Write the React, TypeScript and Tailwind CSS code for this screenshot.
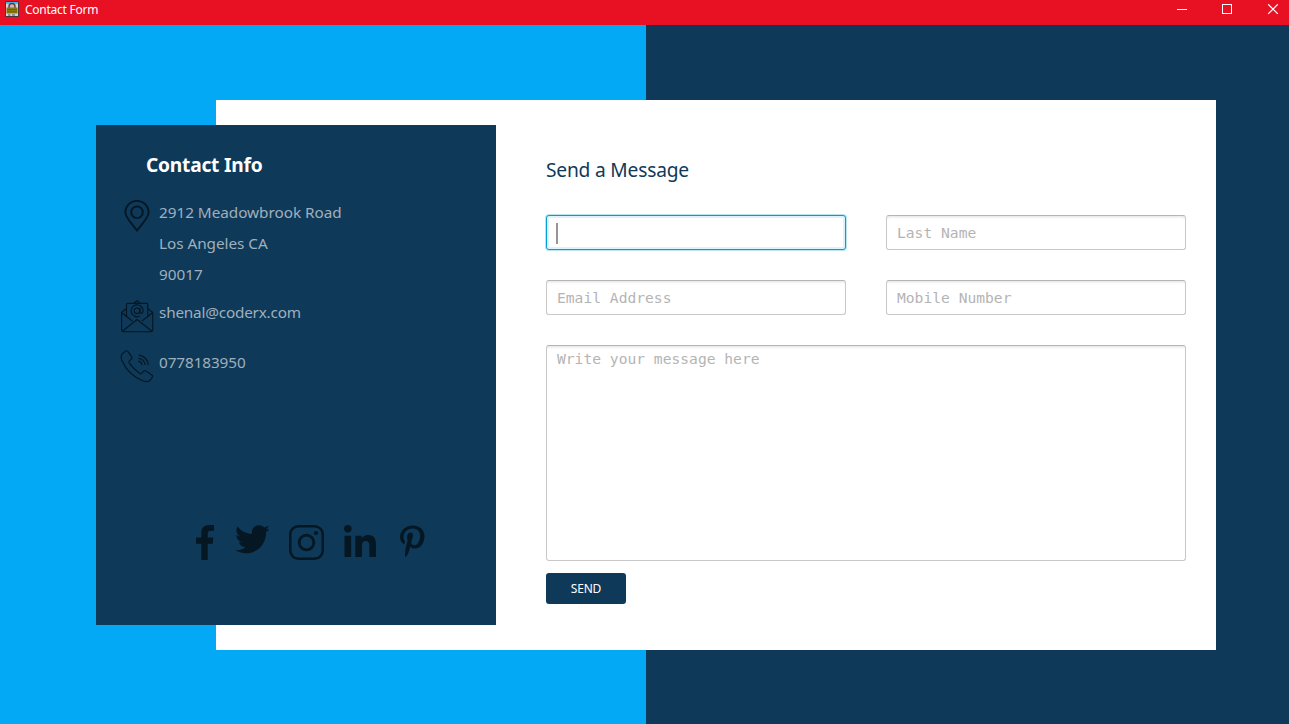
import React from 'react';
import { FaTwitter, FaLinkedinIn, FaPinterestP } from 'react-icons/fa';

const sans = "font-['Noto_Sans','Open_Sans',sans-serif]";
const mono = "font-['DejaVu_Sans_Mono','Liberation_Mono',monospace]";
const field =
  'block w-full resize-none rounded-[3px] border border-[#c8c8c8] border-t-[#b5b5b5] bg-white px-[10px] text-[14.64px] placeholder-[#b4b4b4] outline-none shadow-[inset_0_3px_3px_-2px_rgba(0,0,0,0.12)]';

function AppIcon() {
  return (
    <svg className="ml-[5px] mt-px h-4 w-[14px]" viewBox="0 0 14 16">
      <rect width="14" height="16" rx="1" fill="#4a3440" />
      <rect x="1" y="1" width="12" height="1.5" fill="#45b5e8" />
      <rect x="1" y="2.5" width="12" height="12.5" fill="#d9d4cf" />
      <path d="M4 7V5.500a3 3 0 0 1 6 0V7" fill="#c9b8bb" stroke="#6b3440" strokeWidth="1.400" />
      <rect x="1.500" y="6.500" width="11" height="6" fill="#8a7a14" />
      <path d="M2 8.500h10M2 10.700h10" stroke="#5d520c" strokeWidth=".6" />
      <path d="M3 14h2.500M7 14h3" stroke="#3f4c5f" strokeWidth="1" />
    </svg>
  );
}

function PinIcon() {
  return (
    <svg className="ml-[28px] h-8 w-[26px]" viewBox="0 0 26 32" fill="none" stroke="#051723" strokeWidth="1.9">
      <path d="M13 30.400C10.800 27 1.400 18 1.400 12.400a11.600 11.600 0 0 1 23.200 0C24.600 18 15.200 27 13 30.400Z" />
      <circle cx="13" cy="12.300" r="5.800" />
    </svg>
  );
}

function MailIcon() {
  return (
    <svg className="ml-[24px] mt-px h-[33px] w-[34px]" viewBox="0 0 34 33" fill="none" stroke="#051723" strokeWidth="1.150" strokeLinejoin="round">
      <path d="M6.500 8.500 1.600 12.500V30a1.700 1.700 0 0 0 1.700 1.700H31a1.700 1.700 0 0 0 1.700-1.700V12.500L27.800 8.500" />
      <path d="M6.500 16.500V4.300a1 1 0 0 1 1-1H26.800a1 1 0 0 1 1 1V16.500M14.200 3 17.100.8 20 3" />
      <path d="M1.800 12.800 12.300 21M32.500 12.800 22 21M2.300 31.200 17.100 19.500 32 31.200" />
      <circle cx="17" cy="10.800" r="2.800" />
      <path d="M20 7.700V12c0 2.300 3.100 1.700 3.100-1.200a6 6 0 1 0-3.200 5.300" />
    </svg>
  );
}

function PhoneIcon() {
  return (
    <svg className="ml-[24px] mt-px h-[33px] w-[34px]" viewBox="0 0 34 33" fill="none" stroke="#051723" strokeWidth="1.200" strokeLinejoin="round">
      <path d="M2.300 3.700 5.400 1.100a1.700 1.700 0 0 1 2.400.3l3.700 5.200a2 2 0 0 1-.3 2.600L9.400 11a1.500 1.500 0 0 0-.2 1.800c2.900 4.300 6.400 7.900 10.700 10.700a1.500 1.500 0 0 0 1.900-.2l1.600-1.900a2 2 0 0 1 2.600-.3l5.800 3.800a1.700 1.700 0 0 1 .4 2.400l-1.700 2.500c-1.300 1.900-4.200 2.300-7.600 1C13.300 27.100 5.900 19.700 1.800 10.200 1 7.900.9 5.300 2.300 3.700Z" />
      <path d="M18.700 5.100a10.500 10.500 0 0 1 9.600 9.900M18.500 8.300a7.200 7.200 0 0 1 6.600 6.700M18.200 11.300a4 4 0 0 1 3.800 3.800" />
    </svg>
  );
}

function FacebookIcon() {
  return (
    <svg className="ml-[100px] mt-px h-[35px] w-[18px]" viewBox="0 0 18 35" fill="currentColor">
      <path d="M18 .1h-4.500C8 .1 5.300 3 5.300 8v4.500H0v6.200h5.300V35h6.400V18.700h5l.7-6.200h-5.700V8.800c0-2.200.8-3.100 3-3.100H18z" />
    </svg>
  );
}

function InstagramIcon() {
  return (
    <svg className="ml-[20px] mt-px h-[35px] w-[35px]" viewBox="0 0 35 35" fill="none" stroke="currentColor">
      <rect x="1.250" y="1.250" width="32.500" height="32.500" rx="8.200" strokeWidth="2.500" />
      <circle cx="17.500" cy="17.500" r="7.300" strokeWidth="2.800" />
      <circle cx="27" cy="8" r="2.100" fill="currentColor" stroke="none" />
    </svg>
  );
}

function ContactPanel() {
  return (
    <aside className={`-ml-[120px] flex h-[500px] w-[400px] shrink-0 flex-col bg-[#0f3959] text-[15.300px] leading-[31px] text-[#9fb0bd] ${sans}`}>
      <h2 className="ml-[50px] mt-[26px] h-[28px] whitespace-nowrap text-[19.200px] font-bold leading-[28px] tracking-[-0.230px] text-white">Contact Info</h2>
      <div className="mt-[21px] flex h-[93px]">
        <PinIcon />
        <address className="-mt-[3px] ml-[9px] whitespace-nowrap not-italic tracking-[-0.030px]">
          <div>2912 Meadowbrook Road</div>
          <div>Los Angeles CA</div>
          <div>90017</div>
        </address>
      </div>
      <div className="mt-[6px] flex h-[50px]">
        <MailIcon />
        <span className="-mt-[2px] ml-[5px] tracking-[-0.200px]">shenal@coderx.com</span>
      </div>
      <div className="flex h-[50px]">
        <PhoneIcon />
        <span className="-mt-[2px] ml-[5px] tracking-[-0.090px]">0778183950</span>
      </div>
      <div className="mt-[125px] flex items-start text-[#051723]">
        <FacebookIcon />
        <FaTwitter className="-mt-[2px] ml-[20.500px] h-[34.500px] w-[34.500px]" />
        <InstagramIcon />
        <FaLinkedinIn className="ml-[20px] mt-px h-[36.600px] w-[32px]" />
        <FaPinterestP className="ml-[24px] mt-[0.600px] h-[32.700px] w-[24.500px]" />
      </div>
    </aside>
  );
}

function MessageForm() {
  return (
    <form className={`ml-[50px] w-[640px] ${mono}`} onSubmit={(e) => e.preventDefault()}>
      <h1 className={`mt-[31px] h-[28px] whitespace-nowrap text-[19.200px] leading-[28px] tracking-[-0.200px] text-[#0f3959] ${sans}`}>Send a Message</h1>
      <div className="mt-[31px] grid grid-cols-2 gap-x-10 gap-y-[30px]">
        <div className="flex h-[35px] items-center rounded-[3px] border border-[#039ed3] bg-white pl-[9px] shadow-[0_0_0_1px_#b9e5f3,inset_0_0_0_2px_#e0f2f9]">
          <span className="mt-px h-[21px] w-[2px] bg-[#969696]" />
        </div>
        <input className={`${field} h-[35px]`} placeholder="Last Name" />
        <input className={`${field} h-[35px]`} placeholder="Email Address" />
        <input className={`${field} h-[35px]`} placeholder="Mobile Number" />
      </div>
      <textarea className={`${field} mt-[30px] h-[216px] pt-[3px] leading-[19px]`} placeholder="Write your message here" />
      <button className={`mt-[12px] block h-[31px] w-[80px] rounded-[3px] bg-[#0f3959] text-[12px] tracking-[-0.200px] text-white ${sans}`}>SEND</button>
    </form>
  );
}

export default function App() {
  return (
    <div className="flex h-[724px] w-[1289px] flex-col overflow-hidden">
      <header className={`flex h-[25px] shrink-0 bg-[#e81123] text-white ${sans}`}>
        <AppIcon />
        <span className="ml-[6px] whitespace-nowrap text-[12px] leading-[20px] tracking-[-0.250px]">Contact Form</span>
        <svg className="ml-auto mr-[10px] mt-[4px] h-[11px] w-[102px]" viewBox="0 0 102 11" fill="none" stroke="#fff">
          <path d="M0 5.500h10M45.500.5h9v9h-9z" shapeRendering="crispEdges" />
          <path d="M91.200.3l9.600 9.600M100.800.3l-9.600 9.600" strokeWidth="1.200" />
        </svg>
      </header>
      <main className="h-[699px] bg-[linear-gradient(90deg,#03a9f4_646px,#0f3959_646px)] pl-[216px] pt-[75px]">
        <section className="flex h-[550px] w-[1000px] bg-white py-[25px]">
          <ContactPanel />
          <MessageForm />
        </section>
      </main>
    </div>
  );
}
